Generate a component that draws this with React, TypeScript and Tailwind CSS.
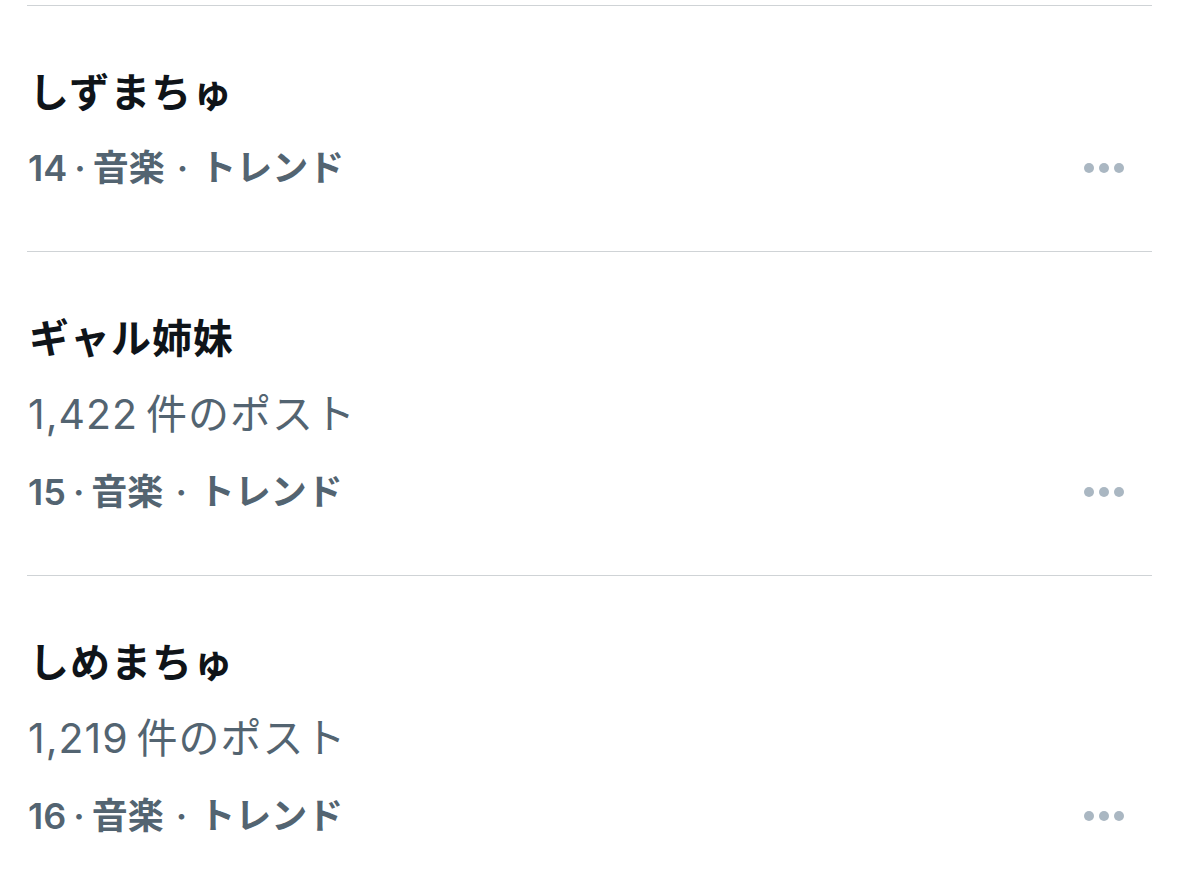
const trends = [
  { title: 'しずまちゅ', rank: 14, posts: null },
  { title: 'ギャル姉妹', rank: 15, posts: '1,422' },
  { title: 'しめまちゅ', rank: 16, posts: '1,219' },
];

const font = { fontFamily: '"Inter", "Noto Sans CJK JP", sans-serif' };

const MoreDots = () => (
  <div className="flex items-center gap-[5px]">
    <span className="w-[10px] h-[10px] rounded-full bg-[#aab7c2]" />
    <span className="w-[10px] h-[10px] rounded-full bg-[#aab7c2]" />
    <span className="w-[10px] h-[10px] rounded-full bg-[#aab7c2]" />
  </div>
);

const App = () => {
  return (
    <div className="w-[1179px] h-[889px] bg-white overflow-hidden pt-[5px]" style={font}>
      <div className="ml-[27px] w-[1125px]">
        {trends.map((t) => (
          <div key={t.rank} className="border-t border-[#cfd3d6] pt-[49px] pb-[46px]">
            <div className="h-[75px] flex items-center pl-[2px] text-[40px] font-bold text-[#0f1419] tracking-[1px]">
              {t.title}
            </div>
            {t.posts && (
              <div className="h-[78px] flex items-center pl-[1px] text-[41px] text-[#536471] tracking-[1px]">
                {t.posts}
                <span className="ml-[8px]">件のポスト</span>
              </div>
            )}
            <div className="h-[75px] flex items-center justify-between pl-[1px] pr-[28px]">
              <div className="flex items-center text-[36px] font-semibold text-[#536471]">
                <span>{t.rank}</span>
                <span className="mx-[7px]">·</span>
                <span>音楽</span>
                <span className="mx-[12px]">·</span>
                <span>トレンド</span>
              </div>
              <MoreDots />
            </div>
          </div>
        ))}
      </div>
    </div>
  );
};

export default App;
